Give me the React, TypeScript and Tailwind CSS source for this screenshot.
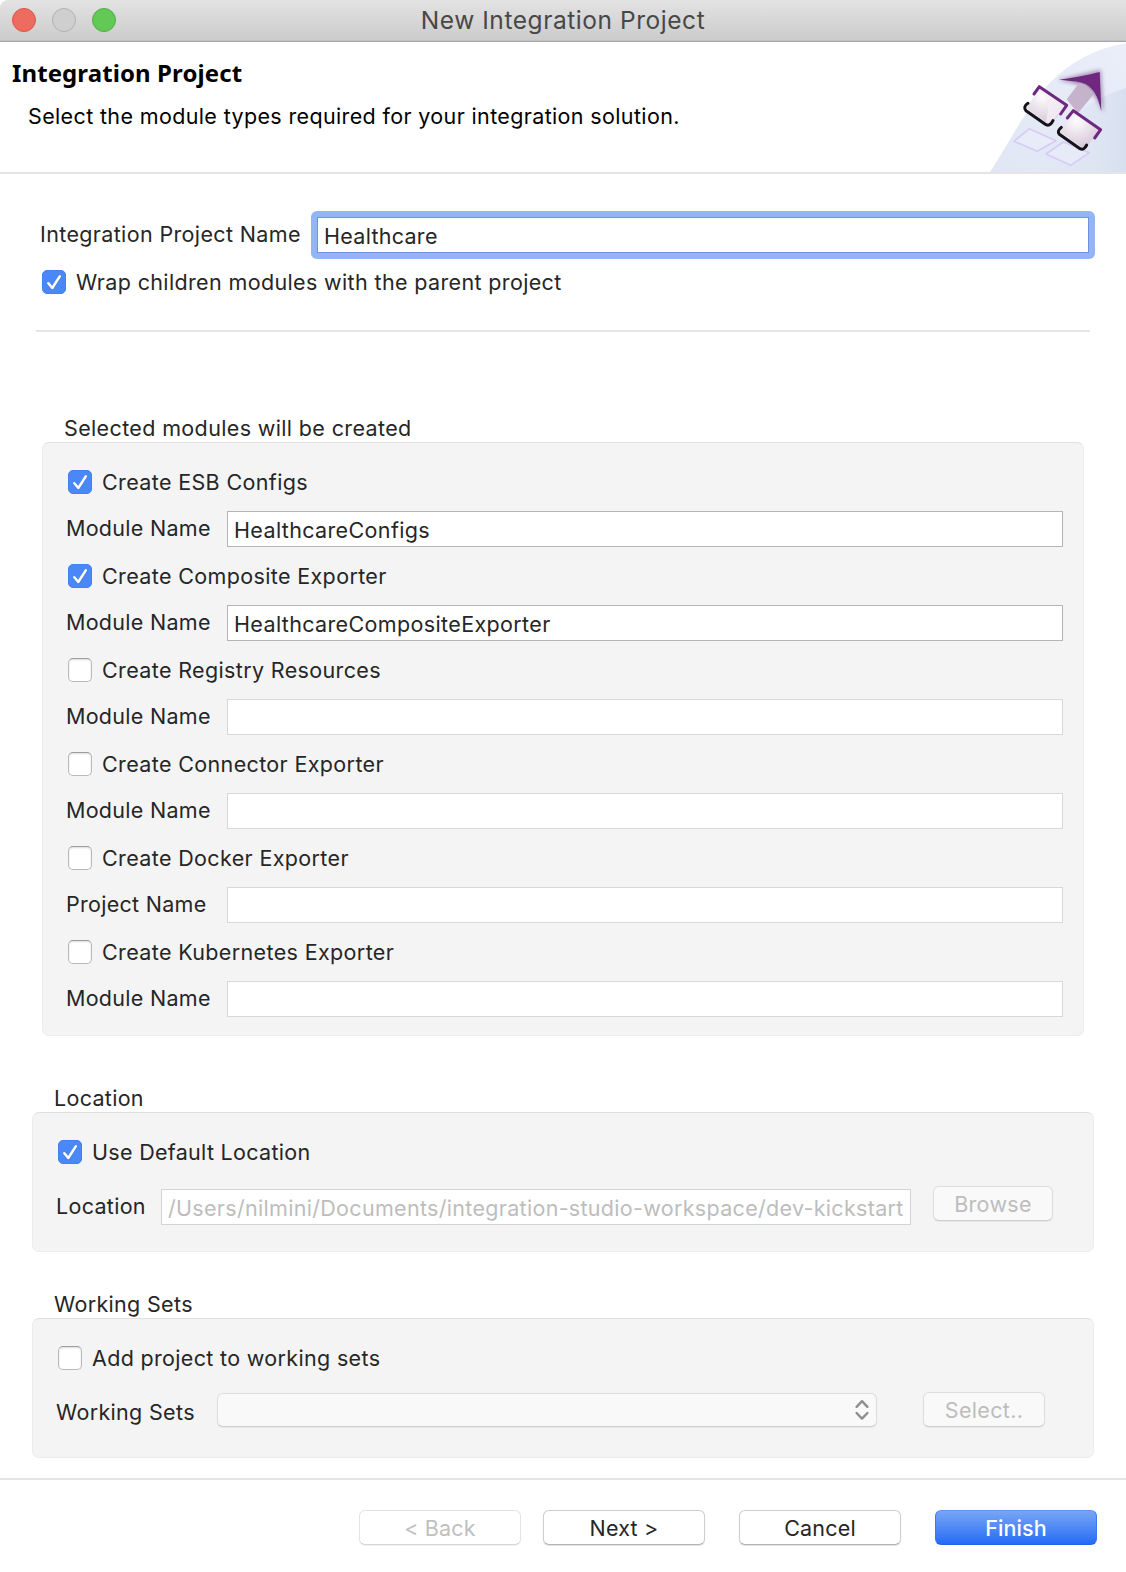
import React from 'react';
import clsx from 'clsx';

type Module = { title: string; field: string; value: string; checked: boolean };

const modules: Module[] = [
  { title: 'Create ESB Configs', field: 'Module Name', value: 'HealthcareConfigs', checked: true },
  { title: 'Create Composite Exporter', field: 'Module Name', value: 'HealthcareCompositeExporter', checked: true },
  { title: 'Create Registry Resources', field: 'Module Name', value: '', checked: false },
  { title: 'Create Connector Exporter', field: 'Module Name', value: '', checked: false },
  { title: 'Create Docker Exporter', field: 'Project Name', value: '', checked: false },
  { title: 'Create Kubernetes Exporter', field: 'Module Name', value: '', checked: false },
];

function Checkbox({ label, checked }: { label: string; checked: boolean }) {
  return (
    <div role="checkbox" aria-checked={checked} className="flex h-6 items-center gap-[10px]">
      {checked ? (
        <span className="h-6 w-6 shrink-0 rounded-[5px] border border-[#4480ee] bg-[#4a88f7]">
          <svg viewBox="0 0 22 22" className="h-[22px] w-[22px]" fill="none" stroke="#fff" strokeWidth="2.5" strokeLinecap="round" strokeLinejoin="round">
            <path d="M5.3 12.2 9.3 17 16.8 5.4" stroke="#3a70d8" strokeOpacity=".6" transform="translate(0 1)" />
            <path d="M5.3 12.2 9.3 17 16.8 5.4" />
          </svg>
        </span>
      ) : (
        <span className="h-6 w-6 shrink-0 rounded-[5px] border border-[#b9b9b9] border-t-[#9c9c9c] bg-white shadow-[inset_0_1px_2px_rgba(0,0,0,0.14)]" />
      )}
      <span>{label}</span>
    </div>
  );
}

function TextField({ value, className }: { value: string; className?: string }) {
  return <div className={clsx('h-9 overflow-hidden border bg-white pt-[5px] pl-[6px]', className)}>{value}</div>;
}

function Group({ title, className, children }: { title: string; className?: string; children: React.ReactNode }) {
  return (
    <section className={className}>
      <h2 className="h-[27px] pl-[22px]">{title}</h2>
      <div className="rounded-[7px] border border-[#ececec] border-t-[#e0e0e0] bg-[#f4f4f4] pt-[27px] pl-[25px]">{children}</div>
    </section>
  );
}

function Button({ label, className }: { label: string; className?: string }) {
  return (
    <button className={clsx('h-[35px] rounded-[6px] border pt-px text-center leading-[26px]', className)}>{label}</button>
  );
}

const disabledButton = 'border-[#dddddd] border-b-[#cfcfcf] bg-[#f9f9f9] text-[#bdbdbd] shadow-[0_1px_1px_rgba(0,0,0,0.06)]';
const plainButton = 'border-[#cdcdcd] border-b-[#b3b3b3] bg-white text-[#262626] shadow-[0_1px_1px_rgba(0,0,0,0.12)]';

function Banner() {
  return (
    <svg viewBox="0 18 450 390" className="h-[130px] w-[150px]" fill="none" strokeLinecap="round" strokeLinejoin="round">
      <defs>
        <linearGradient id="sweep" x1="0" y1="1" x2="1" y2="0">
          <stop offset="0" stopColor="#e0e6f4" />
          <stop offset="1" stopColor="#ebeef9" />
        </linearGradient>
        <linearGradient id="lower" x1="0" y1="0" x2="1" y2="0">
          <stop offset="0" stopColor="#dfe6f4" stopOpacity="0" />
          <stop offset="1" stopColor="#d8e0ef" />
        </linearGradient>
        <radialGradient id="tile" cx=".4" cy=".25" r=".9">
          <stop offset="0" stopColor="#fdfcfd" />
          <stop offset="1" stopColor="#cdb9d0" />
        </radialGradient>
        <filter id="soft" x="-20%" y="-20%" width="140%" height="140%">
          <feGaussianBlur stdDeviation="7" />
        </filter>
      </defs>
      <path d="M42 408C95 325 135 250 180 190C250 95 345 38 450 22V408Z" fill="url(#sweep)" />
      <path d="M450 155C340 190 210 285 165 408H450Z" fill="url(#lower)" />
      <path d="M246 132 374 102 382 230C362 180 345 145 246 132Z" fill="#6c4a80" opacity=".6" filter="url(#soft)" />
      <path d="M272 190 310 140Q340 148 352 176L306 232Z" fill="#c5b3cc" />
      <path d="M248 131C290 127 330 118 371 108L376 226C366 180 350 148 318 140C295 134 272 134 248 131Z" fill="#6f2780" />
      <path d="M160 278 240 314 184 346 114 316ZM262 318 340 350 284 388 210 354Z" fill="#eaecfa" fillOpacity=".7" stroke="#d6cbf5" strokeWidth="5" />
      <path d="M190 154 270 206 224 268 152 216Z" fill="url(#tile)" />
      <path d="M222 178 268 206 222 266 210 258Z" fill="#f4eff5" opacity=".8" />
      <path d="M292 228 372 280 326 340 254 288Z" fill="url(#tile)" />
      <g stroke="#6f2780" strokeWidth="9">
        <path d="M174 174 190 152 272 208 254 234" />
        <path d="M274 246 292 224 374 281 356 306" />
      </g>
      <g stroke="#161318" strokeWidth="9">
        <path d="M156 202Q140 212 150 224L210 266Q222 272 231 254" />
        <path d="M256 274Q242 285 250 295L312 338Q324 344 332 327" />
      </g>
    </svg>
  );
}

export default function App() {
  return (
    <main className="flex h-[1572px] w-[1126px] flex-col bg-white font-['Inter',sans-serif] text-[21.5px] leading-[26px] tracking-[0.36px] whitespace-nowrap text-[#262626]">
      <header className="grid h-[42px] shrink-0 grid-cols-[1fr_auto_1fr] items-center rounded-tl-[8px] border-b border-[#a9a9a9] bg-gradient-to-b from-[#e3e3e3] to-[#cbcbcb] shadow-[inset_0_-1px_0_#c0c0c0]">
        <div className="flex gap-4 pb-px pl-3">
          <span className="h-6 w-6 rounded-full border border-[#dc5549] bg-[#ee6b60]" />
          <span className="h-6 w-6 rounded-full border border-[#b2b2b2] bg-[#cfcfcf]" />
          <span className="h-6 w-6 rounded-full border border-[#4fae43] bg-[#63c956]" />
        </div>
        <h1 className="pb-px text-[24.5px] tracking-[0.55px] text-[#484848]">New Integration Project</h1>
        <span />
      </header>

      <div className="flex h-[132px] shrink-0 justify-between border-b-2 border-[#e4e4e4] text-black">
        <div className="pt-[18px] pl-3">
          <h2 className="font-['Noto_Sans',sans-serif] text-[24px] font-bold tracking-[0.1px]">Integration Project</h2>
          <p className="mt-[17px] pl-4">Select the module types required for your integration solution.</p>
        </div>
        <Banner />
      </div>

      <div className="flex pt-[37px] pl-10">
        <span className="w-[271px] pt-[10px]">Integration Project Name</span>
        <div className="w-[784px] rounded-[6px] bg-[#93b4f5] p-[6px]">
          <TextField value="Healthcare" className="border-[#6f93da] tracking-[0.28px]" />
        </div>
      </div>
      <div className="mt-[11px] pl-[42px]">
        <Checkbox label="Wrap children modules with the parent project" checked />
      </div>
      <hr className="mt-9 mr-9 ml-9 border-t-2 border-[#e5e5e5]" />

      <Group title="Selected modules will be created" className="mt-[83px] mr-[42px] ml-[42px]">
        <div className="flex flex-col gap-[17px] pb-[18px]">
          {modules.map((m) => (
            <div key={m.title} className="flex flex-col gap-[17px]">
              <Checkbox label={m.title} checked={m.checked} />
              <div className="flex">
                <span className="-ml-0.5 w-[161px] pt-1 tracking-[0.28px]">{m.field}</span>
                <TextField value={m.value} className={clsx('w-[836px]', m.value ? 'border-[#b5b5b5]' : 'border-[#d8d8d8]')} />
              </div>
            </div>
          ))}
        </div>
      </Group>

      <Group title="Location" className="mt-[49px] mr-8 ml-8 tracking-[0.3px]">
        <Checkbox label="Use Default Location" checked />
        <div className="mt-[22px] flex h-[65px]">
          <span className="mt-[7px] -ml-0.5 w-[105px]">Location</span>
          <TextField
            value="/Users/nilmini/Documents/integration-studio-workspace/dev-kickstart"
            className="mt-[3px] w-[750px] border-[#d4d4d4] tracking-[0.31px] text-[#bdbdbd]"
          />
          <Button label="Browse" className={clsx('ml-[22px] w-[120px]', disabledButton)} />
        </div>
      </Group>

      <Group title="Working Sets" className="mt-[39px] mr-8 ml-8 tracking-[0.33px]">
        <Checkbox label="Add project to working sets" checked={false} />
        <div className="mt-[22px] flex h-[65px]">
          <span className="mt-[7px] -ml-0.5 w-[161px]">Working Sets</span>
          <div className="mt-px flex h-[34px] w-[660px] items-center justify-end rounded-[6px] border border-[#dddddd] border-b-[#cfcfcf] bg-[#f9f9f9] pr-[7px] shadow-[0_1px_1px_rgba(0,0,0,0.06)]">
            <svg viewBox="0 0 14 22" className="h-[22px] w-[14px]" fill="none" stroke="#8f8f8f" strokeWidth="2.4" strokeLinecap="round" strokeLinejoin="round">
              <path d="M1.6 7.8 7 2.2 12.4 7.8M1.6 14 7 19.6 12.4 14" />
            </svg>
          </div>
          <Button label="Select.." className={clsx('ml-[46px] w-[122px]', disabledButton)} />
        </div>
      </Group>

      <footer className="mt-5 flex grow border-t-2 border-[#e4e4e4] pt-[30px] pl-[359px]">
        <Button label="< Back" className="w-[162px] border-[#e3e3e3] border-b-[#d6d6d6] bg-white tracking-[0.2px] text-[#c0c0c0] shadow-[0_1px_1px_rgba(0,0,0,0.06)]" />
        <Button label="Next >" className={clsx('ml-[22px] w-[162px] tracking-[0.2px]', plainButton)} />
        <Button label="Cancel" className={clsx('ml-[34px] w-[162px] tracking-[0.2px]', plainButton)} />
        <Button label="Finish" className="ml-[34px] w-[162px] border-[#3f78ee] border-t-[#5f93f0] border-b-[#2462ee] bg-gradient-to-b from-[#78a5f5] to-[#256af6] font-medium tracking-[0.1px] text-white" />
      </footer>
    </main>
  );
}
